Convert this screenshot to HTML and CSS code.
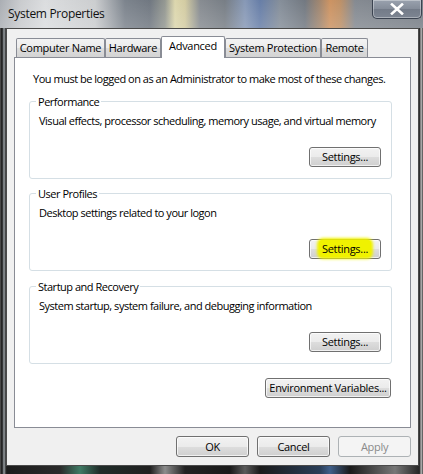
FILE: index.html
```html
<!DOCTYPE html>
<html>
<head>
<meta charset="utf-8">
<title>System Properties</title>
<link rel="stylesheet" href="styles.css">
</head>
<body>
<div class="window">
  <div class="titlebar">
    <span class="title">System Properties</span>
    <div class="close">
      <svg width="16" height="12" viewBox="0 0 16 12"><path d="M3 1.5 L13 10.5 M13 1.5 L3 10.5" stroke="#ffffff" stroke-width="2.6" stroke-linecap="square" fill="none"/></svg>
    </div>
  </div>
  <div class="client">
    <div class="tabs">
      <div class="tab t-cn">Computer Name</div>
      <div class="tab t-hw">Hardware</div>
      <div class="tab t-adv selected">Advanced</div>
      <div class="tab t-sp">System Protection</div>
      <div class="tab t-rm">Remote</div>
    </div>
    <div class="panel">
      <p class="note">You must be logged on as an Administrator to make most of these changes.</p>
      <fieldset class="group">
        <legend>Performance</legend>
        <p class="desc">Visual effects, processor scheduling, memory usage, and virtual memory</p>
        <div class="btnrow"><button class="btn settings">Settings...</button></div>
      </fieldset>
      <fieldset class="group">
        <legend>User Profiles</legend>
        <p class="desc">Desktop settings related to your logon</p>
        <div class="btnrow"><button class="btn settings"><span class="hl">Settings...</span></button></div>
      </fieldset>
      <fieldset class="group last">
        <legend>Startup and Recovery</legend>
        <p class="desc">System startup, system failure, and debugging information</p>
        <div class="btnrow"><button class="btn settings">Settings...</button></div>
      </fieldset>
      <div class="envrow"><button class="btn env">Environment Variables...</button></div>
    </div>
    <div class="footer">
      <button class="btn dlg">OK</button>
      <button class="btn dlg">Cancel</button>
      <button class="btn dlg" disabled>Apply</button>
    </div>
  </div>
</div>
</body>
</html>
```
FILE: styles.css
```css
* { box-sizing: border-box; }
html, body { margin: 0; padding: 0; }
body {
  width: 423px;
  height: 474px;
  overflow: hidden;
  font-family: "Open Sans", "Noto Sans", sans-serif;
  font-size: 11px;
  letter-spacing: -0.48px;
  color: #000;
}
.window {
  width: 423px;
  height: 474px;
  display: flex;
  flex-direction: column;
  background:
    linear-gradient(90deg, #5a5a5a 0, #121212 2px, #9aa0a4 4px, #2a2a2a 6px, transparent 7px, transparent 419px, #3a3a3a 420px, #c8c8c8 421px, #444 423px),
    linear-gradient(90deg, #1a1a1a 0, #2a2a2a 60px, #3f7a64 80px, #1f2b28 100px, #202020 150px, #8c8c8c 165px, #222 185px, #1a1a1a 230px, #5a5a5a 245px, #1a1a1a 260px, #2a3e58 320px, #3f5f8a 330px, #1a1a1a 350px, #777 395px, #1a1a1a 423px);
}
.titlebar {
  height: 28px;
  flex: none;
  display: flex;
  justify-content: space-between;
  align-items: flex-start;
  background:
    linear-gradient(180deg, rgba(255,255,255,0.08) 0, rgba(255,255,255,0.22) 100%),
    linear-gradient(90deg, #a3a7ad 0, #c4c6c9 20px, #d8dadc 45px, #c7c9cb 95px, #717983 125px, #646c76 150px, #8b8f88 165px, #d9d3a6 175px, #cfc79a 185px, #7d8288 200px, #6c737b 225px, #7d90b0 245px, #5a73a0 260px, #7b8591 280px, #666d76 305px, #9a7c62 320px, #c88a55 330px, #b98759 340px, #7a8088 355px, #6d747d 423px);
}
.title {
  margin: 6px 0 0 8px;
  font-size: 12px;
  line-height: 16px;
  letter-spacing: -0.3px;
  color: #111;
}
.close {
  width: 50px;
  height: 19px;
  margin-right: 1px;
  border: 1px solid #3b4350;
  border-top: none;
  border-radius: 0 0 5px 5px;
  background: linear-gradient(180deg, #9aa2ae 0, #848c99 50%, #737b88 51%, #7d8592 100%);
  box-shadow: inset 0 0 0 1px rgba(255,255,255,0.35);
  display: flex;
  align-items: center;
  justify-content: center;
}
.client {
  flex: none;
  height: 438px;
  margin: 0 4px 0 6px;
  border: 1px solid #4a4a4a;
  background: #f0f0f0;
  padding: 7px 7px 0 7px;
}
.tabs {
  display: flex;
  align-items: flex-end;
  height: 21px;
  margin-left: 2px;
}
.tab {
  height: 19px;
  line-height: 17px;
  text-align: center;
  border: 1px solid #898c95;
  border-bottom: none;
  border-radius: 2px 2px 0 0;
  background: linear-gradient(180deg, #f3f3f3 0, #ebebeb 50%, #dddddd 51%, #d3d3d3 100%);
  white-space: nowrap;
  letter-spacing: -0.3px;
}
.t-cn { width: 89px; }
.t-hw { width: 56px; }
.t-adv { width: 64px; }
.t-sp { width: 96px; }
.t-rm { width: 47px; }
.tab.selected {
  height: 22px;
  margin-bottom: -1px;
  line-height: 17px;
  background: #ffffff;
  position: relative;
  z-index: 1;
}
.panel {
  height: 371px;
  border: 1px solid #898c95;
  background: #ffffff;
  padding: 0 18px 0 14px;
}
.note {
  margin: 13px 0 0 4px;
  line-height: 15px;
  white-space: nowrap;
}
.group {
  margin: 8px 0 0 0;
  padding: 0 10px 11px 9px;
  border: 1px solid #d5dfe5;
  border-radius: 3px;
  min-width: 0;
}
.group + .group { margin-top: 7px; }
.group.last { margin-top: 8px; }
.group legend {
  padding: 0 2px;
  margin-left: -3px;
  line-height: 15px;
  color: #000;
}
.desc {
  margin: 4px 0 0 0;
  line-height: 15px;
  white-space: nowrap;
}
.btnrow {
  margin-top: 19px;
  display: flex;
  justify-content: flex-end;
}
.btn {
  font-family: inherit;
  font-size: 11px;
  letter-spacing: -0.3px;
  white-space: nowrap;
  color: #000;
  height: 20px;
  padding: 0;
  border: 1px solid #707070;
  border-radius: 3px;
  background: linear-gradient(180deg, #f2f2f2 0, #ebebeb 50%, #dddddd 51%, #cfcfcf 100%);
  box-shadow: inset 0 0 0 1px rgba(255,255,255,0.7);
  line-height: 16px;
  display: flex;
  align-items: center;
  justify-content: center;
}
.settings { width: 72px; }
.hl {
  background: #f0f200;
  box-shadow: 0 0 3px 2px #f0f200;
  border-radius: 4px;
  padding: 1px 3px 0 3px;
  margin-top: -2px;
}
.envrow {
  margin-top: 14px;
  margin-right: 1px;
  display: flex;
  justify-content: flex-end;
}
.env { width: 126px; }
.footer {
  margin-top: 8px;
  display: flex;
  justify-content: flex-end;
  gap: 8px;
}
.dlg { width: 73px; height: 21px; }
.btn:disabled {
  color: #8a8a8a;
  border-color: #adb2b5;
  background: #f4f4f4;
  box-shadow: none;
}
```
